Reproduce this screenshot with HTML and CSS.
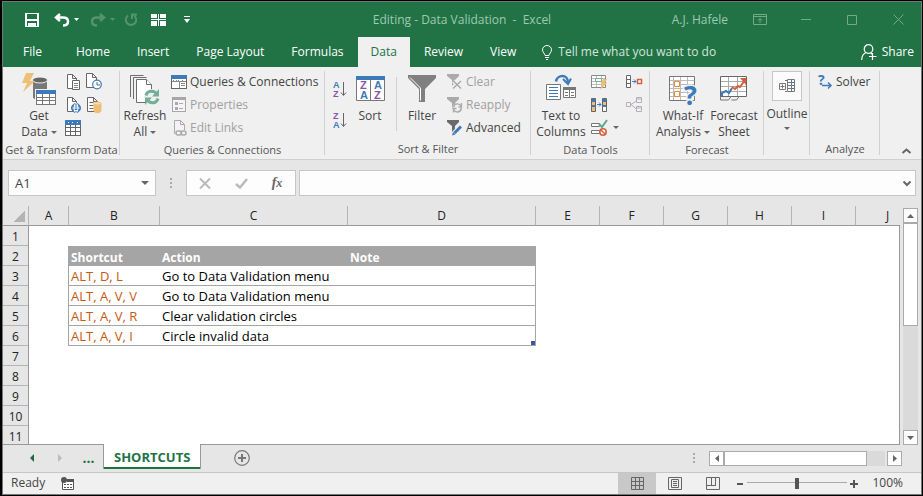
FILE: index.html
```html
<!DOCTYPE html>
<html lang="en">
<head>
<meta charset="utf-8">
<title>Editing - Data Validation - Excel</title>
<link rel="stylesheet" href="styles.css">
</head>
<body>
<div class="window">
  <header class="titlebar">
    <div class="quick">
      <button class="q q-save" aria-label="Save"><svg width="14" height="14" viewBox="0 0 14 14" fill="#fff" shape-rendering="crispEdges"><path fill-rule="evenodd" d="M0 0h14v14H0zM2 1v5h10V1zM2 8v5h1V9h8v4h1V8z"/><path d="M4 10h6v3H8v-1H6v1H4z" fill="#fff"/><path d="M3 9h8v1H3z" fill="#217346"/></svg></button>
      <button class="q q-undo" aria-label="Undo"><svg width="16" height="14" viewBox="0 0 16 14" fill="none" stroke="#fff" stroke-width="2.500"><path d="M6 1L2 4.500 6 8M2 4.500h7c3 0 5 1.500 5 4s-2 4-5 4"/></svg></button>
      <button class="q q-caret" aria-label="Undo history"><svg width="5" height="3"><path d="M0 0h5L2.500 3z" fill="#fff"/></svg></button>
      <button class="q q-undo" aria-label="Redo"><svg width="16" height="14" viewBox="0 0 16 14" fill="none" stroke="#55936f" stroke-width="2.500"><path d="M10 1l4 3.500L10 8M14 4.500H7C4 4.500 2 6 2 8.500s2 4 5 4"/></svg></button>
      <button class="q q-caret" aria-label="Redo history"><svg width="5" height="3"><path d="M0 0h5L2.500 3z" fill="#55936f"/></svg></button>
      <button class="q q-repeat" aria-label="Repeat"><svg width="14" height="14" viewBox="0 0 14 14" fill="none" stroke="#55936f" stroke-width="2"><path d="M4 2.500A5.200 5.200 0 1 0 10 2.500M8 6V1.500h5"/></svg></button>
      <button class="q q-freeze" aria-label="Freeze panes"><svg width="15" height="12" fill="#fff" shape-rendering="crispEdges"><path d="M0 0h6v4H0zM9 0h6v4H9zM0 7h6v5H0zM9 7h6v5H9zM7 0h1v12H7zM0 5h15v1H0z"/></svg></button>
      <button class="q q-more" aria-label="Customize toolbar"><svg width="6" height="7"><path d="M0 0h6v1H0zM0 3h6L3 7z" fill="#fff"/></svg></button>
    </div>
    <div class="doc-title">Editing - Data Validation&nbsp; -&nbsp; Excel</div>
    <div class="win-controls">
      <span class="user">A.J. Hafele</span>
      <button aria-label="Ribbon display options"><svg width="14" height="11" fill="none" stroke="#74a98a"><path d="M.5.5h13v10H.5zM.5 2.500h13M7 9V4.500M5 6.500l2-2 2 2"/></svg></button>
      <button aria-label="Minimize"><svg width="10" height="1"><path d="M0 0h10v1H0z" fill="#74a98a"/></svg></button>
      <button aria-label="Maximize"><svg width="10" height="10" fill="none" stroke="#74a98a"><path d="M.5.500h9v9h-9z"/></svg></button>
      <button aria-label="Close"><svg width="11" height="11" fill="none" stroke="#74a98a"><path d="M.5.500l10 10M10.500.500l-10 10"/></svg></button>
    </div>
  </header>

  <nav class="tabs">
    <a class="tab tab-file" href="#">File</a>
    <a class="tab" href="#">Home</a>
    <a class="tab" href="#">Insert</a>
    <a class="tab" href="#">Page Layout</a>
    <a class="tab" href="#">Formulas</a>
    <a class="tab tab-active" href="#">Data</a>
    <a class="tab" href="#">Review</a>
    <a class="tab" href="#">View</a>
    <button class="tell"><svg width="10" height="15" viewBox="0 0 10 15" fill="none" stroke="#fff"><path d="M3 10.500C3 8.500.5 7.500.5 4.800a4.500 4.300 0 0 1 9 0C9.500 7.500 7 8.500 7 10.500zM3 12.500h4M4 14.500h2"/></svg>Tell me what you want to do</button>
    <button class="share"><svg width="16" height="16" viewBox="0 0 16 16" fill="none" stroke="#fff" stroke-width="1.200"><circle cx="7.500" cy="5" r="4.300"/><path d="M.7 16c0-4 2-6.500 4.500-7.500M9.500 9l1.500 1M11.500 9v7M8 12.500h7.500"/></svg>Share</button>
  </nav>

  <section class="ribbon">
    <div class="group g-get">
      <div class="tools">
        <button class="big w46"><svg width="34" height="32" viewBox="0 0 34 32"><path d="M11 7v17c0 2 3 3 7 3h7V7z" fill="#787878"/><ellipse cx="18" cy="7" rx="7.500" ry="3" fill="#666" stroke="#f0f0f0" stroke-width="1"/><path d="M4 0h8L8 8h5L1 19l4-9H0z" fill="#eebf77"/><g shape-rendering="crispEdges"><path d="M13 16h20v16H13z" fill="#f0f0f0"/><path d="M14 17h20v15H14z" fill="#777"/><path d="M14 17h20v4H14z" fill="#3f7ab8"/><path d="M15 21h5v3h-5zM21 21h6v3h-6zM28 21h5v3h-5zM15 25h5v2h-5zM21 25h6v2h-6zM28 25h5v2h-5zM15 28h5v3h-5zM21 28h6v3h-6zM28 28h5v3h-5z" fill="#fff"/></g></svg><span>Get<br>Data <i class="dd"></i></span></button>
        <div class="icons2">
          <button aria-label="From text"><svg width="16" height="16" fill="#fff" stroke="#666"><path d="M2.500.5h5l4 4v10h-9zM7.500.5v4h4"/><path d="M7.500 6.500h7v9h-7z"/><path d="M9 9.500h4M9 11.500h4M9 13.500h4" stroke="#888"/></svg></button>
          <button aria-label="Recent sources"><svg width="17" height="17" fill="#fff" stroke="#666"><path d="M1.500.5h6l4 4v10h-10zM7.500.5v4h4"/><circle cx="12" cy="11.500" r="4.300" stroke="#3f7ab8" stroke-width="1.200"/><path d="M12 9v3h3" fill="none"/></svg></button>
          <button aria-label="From web"><svg width="16" height="16" fill="#fff" stroke="#666"><path d="M2.500.5h5l4 4v10h-9zM7.500.5v4h4"/><circle cx="11" cy="11" r="4.500" fill="#3f7ab8" stroke="#3f7ab8"/><path d="M7.500 11h7M9 9h4M9 13.500h4" stroke="#fff"/><ellipse cx="11" cy="11" rx="2" ry="4.500" fill="none" stroke="#fff"/></svg></button>
          <button aria-label="Existing connections"><svg width="16" height="16" fill="#fff" stroke="#666"><path d="M1.500.5h6l4 4v10h-10zM7.500.5v4h4M3.500 5.500h4M3.500 8.500h4M3.500 11.500h4"/><path d="M8 6.500v7c0 3 7 3 7 0v-7z" fill="#eebf77" stroke="#eebf77"/><ellipse cx="11.500" cy="6.500" rx="3.500" ry="1.500" fill="#f8dfb5" stroke="#eebf77"/></svg></button>
          <button aria-label="From table"><svg width="16" height="16" shape-rendering="crispEdges"><path d="M0 0h16v16H0z" fill="#666"/><path d="M0 0h16v5H0z" fill="#3f7ab8"/><path d="M3 2h1v1H3zM7 2h1v1H7zM12 2h1v1h-1z" fill="#fff"/><path d="M1 5h4v2H1zM6 5h4v2H6zM11 5h4v2h-4zM1 8h4v3H1zM6 8h4v3H6zM11 8h4v3h-4zM1 12h4v3H1zM6 12h4v3H6zM11 12h4v3h-4z" fill="#fff"/></svg></button>
        </div>
      </div>
      <h2>Get &amp; Transform Data</h2>
    </div>

    <div class="group g-queries">
      <div class="tools">
        <button class="big w42"><svg width="30" height="32" viewBox="0 0 30 32" fill="#fff" stroke="#6d6d6d"><path d="M.5 24V2.500h13M3.500 26V4.500h13" fill="none"/><path d="M6.500 29.500v-23h10l5 5v18z"/><path d="M16.500 6.500v5h5" /><circle cx="22" cy="24" r="8" fill="#f0f0f0" stroke="none"/><path d="M16 22.500c1.500-5.500 8.500-5.500 11-1M28 25.500c-1.500 5.500-8.500 5.500-11 1" fill="none" stroke="#74ae98" stroke-width="3"/><path d="M29 16v7.500h-7zM15 32v-7.500h7z" fill="#74ae98" stroke="none"/></svg><span>Refresh<br>All <i class="dd"></i></span></button>
        <div class="list">
          <button><svg width="16" height="14" shape-rendering="crispEdges"><path d="M0 0h16v14H0z" fill="#666"/><path d="M0 0h16v4H0z" fill="#3f7ab8"/><path d="M1 4h14v9H1z" fill="#fff"/><path d="M2 5h1v1H2zM5 5h1v1H5zM7 5h1v1H7zM11 5h1v1h-1zM1 6h14v1H1zM8 6h1v7H8zM10 8h4v1h-4zM10 10h4v1h-4z" fill="#888"/></svg>Queries &amp; Connections</button>
          <button class="off"><svg width="16" height="16" shape-rendering="crispEdges"><path d="M1 0h14v15H1z" fill="#a9a6a9"/><path d="M2 3h12v11H2z" fill="#f6f4f6"/><path d="M4 5h3v3H4zM4 10h3v3H4zM8 6h4v1H8zM8 11h4v1H8z" fill="#aaa"/></svg>Properties</button>
          <button class="off"><svg width="16" height="16" fill="#f4f2f4" stroke="#aaa"><path d="M3.500.5h6l4 4v9h-10zM9.500.5v4h4"/><path d="M4 10h12v6H4z" fill="#f0f0f0" stroke="none"/><rect x="5" y="11" width="5.500" height="4" rx="2" stroke-width="1.500"/><rect x="10" y="11" width="5" height="4" rx="2" stroke-width="1.500" fill="none"/></svg>Edit Links</button>
        </div>
      </div>
      <h2>Queries &amp; Connections</h2>
    </div>

    <div class="group g-sort">
      <div class="tools">
        <div class="az">
          <button aria-label="Sort A to Z"><svg width="16" height="18"><text class="zl a" x="1" y="8">A</text><text class="zl z" x="1" y="17">Z</text><path d="M11.500 2v13M9 12.500l2.500 3 2.500-3" fill="none" stroke="#666"/></svg></button>
          <button aria-label="Sort Z to A"><svg width="16" height="18"><text class="zl z" x="1" y="8">Z</text><text class="zl a" x="1" y="17">A</text><path d="M11.500 2v13M9 12.500l2.500 3 2.500-3" fill="none" stroke="#666"/></svg></button>
        </div>
        <button class="big w42"><svg width="29" height="32"><path d="M.5 3.500h28v24H.5z" fill="#fff" stroke="#777"/><path d="M0 3h29v4H0z" fill="#3f7ab8"/><path d="M14.500 7v20" stroke="#777"/><text class="zb z" x="4" y="16">Z</text><text class="zb a" x="4" y="26">A</text><text class="zb a" x="18" y="16">A</text><text class="zb z" x="18" y="26">Z</text></svg><span>Sort</span></button>
        <span class="rule"></span>
        <button class="big w40"><svg width="28" height="32"><path d="M0 2h28v3L17 16v13h-6V16L0 5z" fill="#808080"/><path d="M2 4.500L12.500 15v12.500" fill="none" stroke="#fff"/></svg><span>Filter</span></button>
        <div class="list adv">
          <button class="off"><svg width="16" height="16"><path d="M0 0h12v2L8 6v6H5V6L0 2z" fill="#aaa"/><path d="M6.500 7l7 7M13.500 7l-8 7" stroke="#f0f0f0" stroke-width="4"/><path d="M6.500 7l7.500 7.500M14 7l-8 7.500" stroke="#aaa" stroke-width="1.500"/></svg>Clear</button>
          <button class="off"><svg width="16" height="16" fill="none"><path d="M0 0h12v2L8 6v6H5V6L0 2z" fill="#aaa"/><circle cx="10.500" cy="11" r="5" fill="#f0f0f0"/><path d="M6.500 10c1-4 6-4 7.500-1M14.500 11c-1 5-6 5-7.500 2M14.500 6v4h-3M6.500 15.500v-4h3" stroke="#aaa" stroke-width="1.400"/></svg>Reapply</button>
          <button><svg width="16" height="16"><path d="M0 0h12v2L8 6v6H5V6L0 2z" fill="#6a6a6a"/><path d="M7 13.500L14 6" stroke="#f0f0f0" stroke-width="5"/><path d="M7.500 13L14 6.500" stroke="#3f7ab8" stroke-width="3"/><path d="M5 15.500l1-3.500 2.500 2.500z" fill="#3f7ab8"/></svg>Advanced</button>
        </div>
      </div>
      <h2>Sort &amp; Filter</h2>
    </div>

    <div class="group g-data">
      <div class="tools">
        <button class="big w52"><svg width="30" height="32" fill="none"><path d="M.5 11.500h14v15H.5z" fill="#fff" stroke="#777"/><path d="M3 14.500h9M3 17.500h9M3 20.500h9M3 23.500h9" stroke="#3f7ab8"/><path d="M17.500 14.500h12v10h-12z" fill="#fff" stroke="#777"/><path d="M17 14h13v3H17z" fill="#777"/><path d="M23.500 17v8M19 19.500h3M19 22.500h3M25 19.500h3M25 22.500h3" stroke="#777"/><path d="M10 8.500c1-7 12-8 12 1" stroke="#3f7ab8" stroke-width="2.500"/><path d="M17 6l5 5 3-5.500" stroke="#3f7ab8" stroke-width="2"/></svg><span>Text to<br>Columns</span></button>
        <div class="icons-data">
          <button aria-label="Flash Fill"><svg width="16" height="16"><path d="M.5 1.500h14v12H.5z" fill="#fff" stroke="#888"/><path d="M1 4.500h13M1 7.500h13M1 10.500h13M5.500 2v11M10.500 2v11" stroke="#bbb"/><path d="M4.500 4.500h6v3h-6z" fill="#fff" stroke="#74ae98"/><path d="M12 5h4l-2 4h2l-7 7 2-5H9z" fill="#eebf77"/></svg></button>
          <button aria-label="Consolidate"><svg width="16" height="14"><path d="M.5.500h4v12h-4z" fill="#fff" stroke="#666"/><path d="M.5 4.500h4M.5 8.500h4" stroke="#666"/><path d="M6 6.500h4M8 4.500l2 2-2 2" stroke="#3f7ab8" fill="none"/><path d="M11.500 4.500h4v4h-4z" fill="#fff" stroke="#d75c3d" stroke-width="1.500"/></svg></button>
          <button aria-label="Remove Duplicates"><svg width="16" height="14" fill="none"><path d="M.5.5h4v13h-4z" stroke="#666" fill="#3f7ab8"/><path d="M1 4h3v3H1zM1 9h3v4H1z" fill="#eebf77"/><path d="M11.500.5h4v13h-4z" stroke="#666" fill="#3f7ab8"/><path d="M12 4h3v3h-3z" fill="#eebf77"/><path d="M12 9h3v4h-3z" fill="#fff"/><path d="M6 6.500h4M8 4.500l2 2-2 2" stroke="#3f7ab8"/></svg></button>
          <button aria-label="Relationships"><svg width="16" height="16" fill="#f4f0f4" stroke="#b5b0b5"><path d="M5 7.500l6-4M5 7.500l6 5" /><path d="M.5 5.500h4v4h-4zM10.500.5h5v5h-5zM10.500 9.500h5v5h-5zM10 2h6M10 11h6"/></svg></button>
          <button aria-label="Data Validation" class="dv"><svg width="16" height="16" fill="none"><path d="M.5 3.500h8v3h-8zM.5 10.500h8v3h-8z" fill="#fff" stroke="#777"/><path d="M8 4l3 3 5-7" stroke="#5fa98a" stroke-width="2"/><circle cx="12" cy="12" r="3.200" fill="#fff" stroke="#d75c3d" stroke-width="1.500"/><path d="M10 10l4 4" stroke="#d75c3d" stroke-width="1.500"/></svg><i class="dd"></i></button>
        </div>
      </div>
      <h2>Data Tools</h2>
    </div>

    <div class="group g-forecast">
      <div class="tools">
        <button class="big w56"><svg width="29" height="32"><path d="M.5 3.500h25v24H.5z" fill="#fff" stroke="#777"/><path d="M1 7.500h24M1 11.500h24M1 15.500h24M1 19.500h24M1 23.500h24M4.500 4v23M11.500 4v23M18.500 4v23" stroke="#bbb"/><path d="M5.500 8.500h5v5h-5zM5.500 18.500h5v5h-5z" fill="#fff" stroke="#e58a35"/><text class="qm" x="15" y="32">?</text></svg><span>What-If<br>Analysis <i class="dd"></i></span></button>
        <button class="big w46"><svg width="30" height="32" fill="none"><path d="M1.500 3.500h26v20h-26z" fill="#fff" stroke="#666"/><path d="M2 8.500h25M2 13.500h25M2 18.500h25M9.500 4v19M18.500 4v19" stroke="#aaa"/><path d="M1.500 23v4h8l3-4M12.500 27h5l3-4" stroke="#777"/><path d="M3 23v-3l4-2 3 2 3-5" stroke="#3f7ab8" stroke-width="2"/><path d="M13 14l3 2 3-3 2 1 5-7" stroke="#d75c3d" stroke-width="2"/><path d="M21 5h6v7z" fill="#d75c3d"/></svg><span>Forecast<br>Sheet</span></button>
      </div>
      <h2>Forecast</h2>
    </div>

    <div class="group g-outline">
      <button class="outline"><span class="box"><svg width="16" height="14" fill="none" stroke="#777"><path d="M.5 4.500h6v6h-6zM3.500 5.500v4M1.500 7.500h4M6 1.500h2M6 12.500h2"/><path d="M8.500.5h7v12h-7zM12.500 1v12M9 3.500h6M9 6.500h6M9 9.500h6"/><path d="M13 3.500h2M13 6.500h2M13 9.500h2" stroke="#3f7ab8"/></svg></span><span>Outline</span><i class="dd"></i></button>
    </div>

    <div class="group g-analyze">
      <div class="tools">
        <div class="list">
          <button><svg width="15" height="15"><text class="qs" x="0" y="11">?</text><path d="M4 11.500h9M10 8.500l3 3-3 3" stroke="#3f7ab8" stroke-width="1.500" fill="none"/></svg>Solver</button>
        </div>
      </div>
      <h2>Analyze</h2>
    </div>
    <button class="collapse" aria-label="Collapse ribbon"><svg width="9" height="6" fill="none" stroke="#666" stroke-width="2"><path d="M.5 5L4.500 1.500 8.500 5"/></svg></button>
  </section>

  <section class="formula-row">
    <div class="namebox"><input aria-label="Name box" value="A1"><i class="dd dd-lg"></i></div>
    <span class="grip"></span>
    <div class="fx">
      <button aria-label="Cancel"><svg width="12" height="11" stroke="#bbb" stroke-width="2"><path d="M1 .5l10 10M11 .5l-10 10"/></svg></button>
      <button aria-label="Enter"><svg width="13" height="11" fill="none" stroke="#bbb" stroke-width="2.500"><path d="M1 6l4 3.500L12 1"/></svg></button>
      <button aria-label="Insert function" class="fxi">f<small>x</small></button>
    </div>
    <div class="formula"><input aria-label="Formula bar"><svg width="8" height="5" fill="none" stroke="#666" stroke-width="2"><path d="M.5.500L4 4 7.500.500"/></svg></div>
  </section>

  <main class="sheet-area">
    <div class="sheet">
      <table>
        <colgroup><col class="c-row"><col class="c-a"><col class="c-b"><col class="c-w"><col class="c-w"><col class="c-n"><col class="c-n"><col class="c-n"><col class="c-n"><col class="c-n"><col class="c-n"></colgroup>
        <thead><tr><th class="corner"></th><th>A</th><th>B</th><th>C</th><th>D</th><th>E</th><th>F</th><th>G</th><th>H</th><th>I</th><th>J</th></tr></thead>
        <tbody>
          <tr><th>1</th><td></td><td></td><td></td><td></td><td colspan="6"></td></tr>
          <tr class="head"><th>2</th><td class="edge"></td><td>Shortcut</td><td>Action</td><td>Note</td><td colspan="6"></td></tr>
          <tr class="rec"><th>3</th><td class="edge"></td><td>ALT, D, L</td><td>Go to Data Validation menu</td><td></td><td colspan="6"></td></tr>
          <tr class="rec"><th>4</th><td class="edge"></td><td>ALT, A, V, V</td><td>Go to Data Validation menu</td><td></td><td colspan="6"></td></tr>
          <tr class="rec"><th>5</th><td class="edge"></td><td>ALT, A, V, R</td><td>Clear validation circles</td><td></td><td colspan="6"></td></tr>
          <tr class="rec last"><th>6</th><td class="edge"></td><td>ALT, A, V, I</td><td>Circle invalid data</td><td></td><td colspan="6"></td></tr>
          <tr><th>7</th><td></td><td></td><td></td><td></td><td colspan="6"></td></tr>
          <tr><th>8</th><td></td><td></td><td></td><td></td><td colspan="6"></td></tr>
          <tr><th>9</th><td></td><td></td><td></td><td></td><td colspan="6"></td></tr>
          <tr><th>10</th><td></td><td></td><td></td><td></td><td colspan="6"></td></tr>
          <tr><th>11</th><td></td><td></td><td></td><td></td><td colspan="6"></td></tr>
        </tbody>
      </table>
      <span class="sheet-edge"></span>
    </div>
    <div class="vscroll">
      <button aria-label="Scroll up"><svg width="7" height="4"><path d="M0 4h7L3.500 0z" fill="#666"/></svg></button>
      <span class="vthumb"></span>
      <button aria-label="Scroll down"><svg width="7" height="4"><path d="M0 0h7L3.500 4z" fill="#666"/></svg></button>
    </div>
  </main>

  <footer class="sheet-tabs">
    <button class="nav" aria-label="Previous sheet"><svg width="4" height="8"><path d="M4 0v8L0 4z" fill="#1c6b3f"/></svg></button>
    <button class="nav" aria-label="Next sheet"><svg width="4" height="8"><path d="M0 0v8l4-4z" fill="#bbb"/></svg></button>
    <button class="nav dots">...</button>
    <button class="sheet-tab">SHORTCUTS</button>
    <button class="add" aria-label="New sheet"><svg width="16" height="16" fill="none" stroke="#777"><circle cx="8" cy="8" r="7.300" stroke-width="1.200"/><path d="M8 4v8M4 8h8" stroke-width="2"/></svg></button>
    <span class="grip tabs-grip"></span>
    <div class="hscroll">
      <button aria-label="Scroll left"><svg width="4" height="7"><path d="M4 0v7L0 3.500z" fill="#666"/></svg></button>
      <span class="hthumb"></span>
      <span class="htrack"></span>
      <button aria-label="Scroll right"><svg width="4" height="7"><path d="M0 0v7l4-3.500z" fill="#666"/></svg></button>
    </div>
  </footer>

  <div class="status">
    <span class="ready">Ready</span>
    <button class="macro" aria-label="Record macro"><svg width="14" height="13"><path d="M1.500 3.500h11v9h-11z" fill="#fff" stroke="#555"/><path d="M6 2h7v3H6z" fill="#555"/><path d="M3 7.500h8M3 10.500h8" stroke="#555" stroke-dasharray="2 1"/><circle cx="3" cy="3" r="3" fill="#555"/></svg></button>
    <div class="views">
      <button class="view on" aria-label="Normal view"><svg width="13" height="13" fill="none" stroke="#666"><path d="M.5.500h12v12H.5zM4.500 0v13M8.500 0v13M0 4.500h13M0 8.500h13"/></svg></button>
      <button class="view" aria-label="Page layout view"><svg width="14" height="13" fill="none" stroke="#666"><path d="M.5.500h13v12H.5zM3.500 2.500h7v8h-7zM5 4.500h4M5 6.500h4M5 8.500h4"/></svg></button>
      <button class="view" aria-label="Page break preview"><svg width="14" height="13" fill="none" stroke="#666"><path d="M.5.500h13v12H.5zM5.500 0v8M9.500 0v8M0 8.500h10"/></svg></button>
    </div>
    <button class="zoom-b" aria-label="Zoom out"><svg width="6" height="2"><path d="M0 0h6v2H0z" fill="#555"/></svg></button>
    <input class="zoom" type="range" aria-label="Zoom" min="0" max="100" value="50">
    <button class="zoom-b" aria-label="Zoom in"><svg width="8" height="8"><path d="M3 0h2v3h3v2H5v3H3V5H0V3h3z" fill="#555"/></svg></button>
    <span class="pct">100%</span>
  </div>
</div>
</body>
</html>
```
FILE: styles.css
```css
* { box-sizing: border-box; }
html, body { height: 100%; }
body {
  margin: 0;
  padding: 1px 1px 1px 2px;
  background: #000;
  color: #444;
  font: 12px/16px "Open Sans", "Noto Sans", sans-serif;
}
button, input { font: inherit; color: inherit; }
button {
  display: flex;
  align-items: center;
  justify-content: center;
  padding: 0;
  border: 0;
  background: none;
  white-space: nowrap;
}
svg { display: block; flex: none; overflow: visible; }

.window {
  height: 100%;
  display: flex;
  flex-direction: column;
  border: 1px solid #777;
  background: #e6e6e6;
  overflow: hidden;
}

/* Title bar */
.titlebar {
  flex: none;
  height: 35px;
  display: grid;
  grid-template-columns: 1fr auto 1fr;
  align-items: center;
  background: #217346;
  color: #9fc9b0;
}
.quick { display: flex; align-items: center; padding-left: 18px; }
.q { height: 20px; }
.q-save { width: 22px; }
.q-undo { width: 30px; }
.q-undo svg { margin-left: 8px; }
.q-caret { width: 5px; }
.q-undo + .q-caret { margin-left: 1px; }
.q-repeat { width: 31px; }
.q-freeze { width: 25px; }
.q-more { width: 32px; }
.win-controls { display: flex; align-items: center; justify-content: flex-end; height: 31px; }
.win-controls button { width: 46px; height: 31px; }
.user { margin-right: 9px; }

/* Menu tabs */
.tabs { flex: none; height: 30px; display: flex; background: #217346; color: #fff; padding-left: 7px; gap: 1px; }
.tab { padding: 0 13px; line-height: 30px; color: inherit; text-decoration: none; white-space: nowrap; }
.tab-file { margin-right: 7px; }
.tab-active { background: #f0f0f0; color: #217346; }
.tell { margin-left: 12px; gap: 6px; color: #d3e5da; }
.share { margin-left: auto; margin-right: 7px; gap: 5px; }

/* Ribbon */
.ribbon { flex: none; height: 93px; display: flex; background: #f0f0f0; border-bottom: 1px solid #d0d0d0; }
.group {
  flex: none;
  display: flex;
  flex-direction: column;
  padding-top: 3px;
  background: linear-gradient(#d0d0d0, #d0d0d0) right 4px / 1px 84px no-repeat;
}
.group h2 { margin: 0; font-size: 11px; font-weight: 400; line-height: 20px; text-align: center; color: #555; white-space: nowrap; }
.tools { height: 72px; display: flex; align-items: flex-start; }
.g-get { width: 117px; }
.g-get .tools { padding-left: 13px; }
.g-queries { width: 205px; }
.g-queries .tools { padding-left: 4px; }
.g-sort { width: 206px; }
.g-sort .tools { padding-left: 6px; }
.g-data { width: 119px; }
.g-data .tools { padding-left: 4px; }
.g-forecast { width: 114px; }
.g-forecast .tools { padding-left: 5px; }
.g-outline { width: 46px; }
.g-analyze { width: 70px; }
.g-analyze .tools { padding-left: 3px; }
.big { flex-direction: column; justify-content: flex-start; padding-top: 3px; gap: 3px; }
.w40 { width: 40px; }
.w42 { width: 42px; }
.w46 { width: 46px; }
.w52 { width: 52px; }
.w56 { width: 56px; }
.dd { display: inline-block; border: solid transparent; border-width: 3px 3px 0; border-top-color: #666; vertical-align: middle; }
.dd-lg { border-width: 4px 4px 0; }
.icons2 { display: grid; grid-template: repeat(3, 23px) / 21px 21px; }
.list { display: flex; flex-direction: column; padding-left: 5px; }
.list button { height: 23px; justify-content: flex-start; gap: 3px; }
.off { color: #a0a0a0; }
.az { width: 18px; padding-top: 3px; }
.az button { height: 31px; width: 18px; }
.zl { font: 700 9px "Liberation Sans", sans-serif; }
.zb { font: 700 11px "Liberation Sans", sans-serif; }
.a { fill: #3f7ab8; }
.z { fill: #8a52a8; }
.rule { width: 1px; height: 54px; margin: 7px 5px 0; background: #d0d0d0; }
.icons-data { display: grid; grid-template: repeat(3, 23px) / 35px 16px; padding-left: 4px; }
.icons-data button { justify-content: flex-start; gap: 6px; }
.qm { font: 700 27px "Open Sans", sans-serif; fill: #3f7ab8; stroke: #f0f0f0; stroke-width: 3px; paint-order: stroke; }
.qs { font: 700 14px "Open Sans", sans-serif; fill: #3f7ab8; }
.outline { flex-direction: column; padding-top: 1px; }
.box { display: flex; align-items: center; justify-content: center; width: 30px; height: 30px; margin-bottom: 5px; border: 1px solid #c6c6c6; background: #fbfbfb; }
.outline .dd { margin-top: 5px; }
.collapse { margin: auto 10px 5px auto; }

/* Formula bar */
.formula-row { flex: none; height: 46px; display: flex; padding: 10px 5px; }
.namebox, .fx, .formula { display: flex; align-items: center; height: 26px; border: 1px solid #c6c6c6; background: #fdfdfd; }
.namebox { width: 148px; padding-right: 6px; }
.namebox input { flex: 1; min-width: 0; padding: 0 6px; font-size: 13px; }
.formula input { flex: 1; min-width: 0; padding: 0 6px; }
input { border: 0; outline: 0; background: none; }
.grip { width: 2px; height: 10px; margin: 8px 14px; background: repeating-linear-gradient(#aaa 0 2px, transparent 2px 4px); }
.fx { width: 110px; margin-right: 3px; }
.fx button { flex: 1; }
.fx .fxi { font: italic 700 14px "Liberation Serif", serif; color: #666; }
.fxi small { font-size: 12px; }
.formula { flex: 1; padding-right: 4px; }

/* Worksheet */
.sheet-area { flex: 1; min-height: 0; display: flex; }
.sheet { flex: 1; min-width: 0; display: grid; grid-template: 19px minmax(0, 1fr) / minmax(0, 1fr); overflow: hidden; border-bottom: 1px solid #999; }
.sheet table { grid-area: 1 / 1 / 3 / 2; align-self: start; table-layout: fixed; width: 917px; border-spacing: 0; }
.sheet-edge { grid-area: 2 / 1; justify-self: end; width: 1px; background: #999; z-index: 1; }
.c-row { width: 26px; }
.c-a { width: 40px; }
.c-b { width: 91px; }
.c-w { width: 188px; }
.c-n { width: 64px; }
th, td { height: 20px; padding: 2px 2px 0; line-height: 17px; white-space: nowrap; overflow: hidden; font-size: 13px; }
th { font-weight: 400; color: #222; text-align: center; background: #e6e6e6; border-right: 1px solid #999; border-bottom: 1px solid #999; }
thead th { padding: 0; line-height: 19px; font-size: 12px; border-right-color: #b4b4b4; }
thead .corner { background: linear-gradient(135deg, transparent 50%, #b4b4b4 50%) 10px 4px / 12px 12px no-repeat; }
tbody th { font-size: 12px; border-bottom-color: #b4b4b4; }
td { background: #fff; color: #000; }
.head td:nth-child(n+3):nth-child(-n+5) { background: #a5a5a5; color: #fff; font-weight: 700; font-size: 12px; }
.edge { border-right: 1px solid #a5a5a5; }
.rec td:nth-child(n+3):nth-child(-n+5) { border-bottom: 1px solid #a5a5a5; }
.rec td:nth-child(3) { color: #c65911; }
.rec td:nth-child(5) { border-right: 1px solid #a5a5a5; }
.last td:nth-child(5) { background: linear-gradient(#4056a0, #4056a0) right bottom / 4px 4px no-repeat #fff; }
.vscroll { flex: none; width: 21px; display: flex; flex-direction: column; margin-top: 2px; padding: 0 3px; background: linear-gradient(#dadada, #dadada) 3px 0 / 15px 100% no-repeat; }
.vscroll button, .hscroll button { flex: none; width: 15px; height: 15px; background: #fff; border: 1px solid #ababab; }
.vthumb { width: 15px; height: 103px; margin-bottom: auto; background: #fff; border: 1px solid #ababab; }

/* Sheet tabs */
.sheet-tabs { flex: none; height: 27px; display: flex; padding-right: 19px; }
.nav { width: 28px; height: 25px; }
.nav:first-child { margin-left: 15px; }
.dots { width: 29px; color: #217346; font-weight: 700; font-size: 14px; }
.sheet-tab { position: relative; height: 25px; margin-top: -1px; padding: 0 10px; background: #fff; border: solid #999; border-width: 0 1px; box-shadow: inset 0 -2px #217346; color: #217346; font-weight: 700; font-size: 13px; }
.add { width: 16px; height: 25px; margin-left: 33px; }
.tabs-grip { margin: 8px 14px 0 auto; }
.hscroll { display: flex; width: 193px; margin-top: 6px; height: 15px; }
.hthumb { flex: 1; background: #fff; border: 1px solid #ababab; }
.htrack { width: 18px; margin-right: 2px; background: #dadada; }

/* Status bar */
.status { flex: none; height: 22px; display: flex; align-items: stretch; padding-right: 18px; background: #f0f0f0; border-top: 1px solid #c6c6c6; }
.ready { padding-left: 8px; line-height: 19px; }
.macro { margin-left: 16px; }
.views { display: flex; margin-left: auto; margin-right: 1px; }
.view { width: 38px; }
.on { background: #c8c8c8; }
.zoom-b { width: 14px; }
.zoom { appearance: none; width: 100px; margin: 0; background: linear-gradient(#aaa, #aaa) 0 9px / 100% 1px no-repeat; }
.zoom::-webkit-slider-thumb { appearance: none; width: 4px; height: 11px; background: #555; }
.pct { width: 42px; line-height: 19px; text-align: right; }
```
